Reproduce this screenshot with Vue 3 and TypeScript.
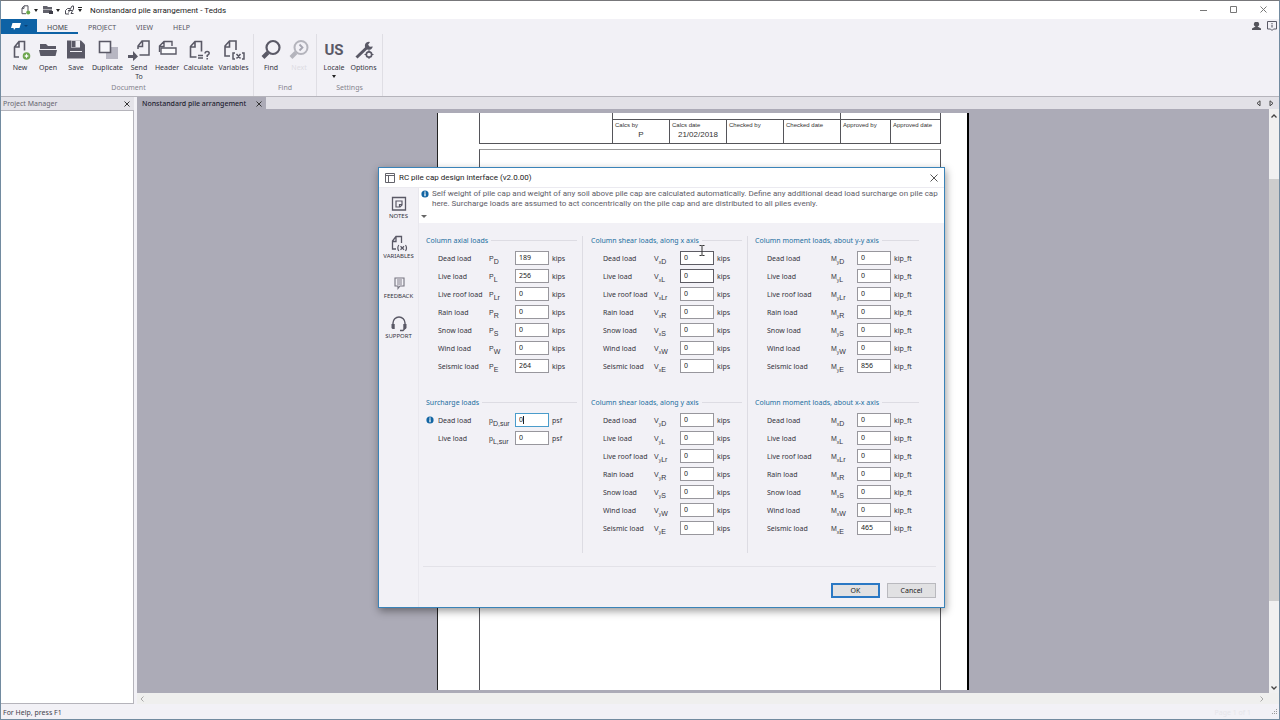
<script setup lang="ts">
import { reactive } from 'vue'

interface Load {
  id: string
  label: string
  base: string
  axis: string
  sub: string
  value: string
  state?: 'focused' | 'dark'
  info?: boolean
}
interface Group {
  title: string
  unit: string
  kind: 'narrow' | 'wide'
  loads: Load[]
}

const names: [string, string][] = [
  ['Dead load', 'D'],
  ['Live load', 'L'],
  ['Live roof load', 'Lr'],
  ['Rain load', 'R'],
  ['Snow load', 'S'],
  ['Wind load', 'W'],
  ['Seismic load', 'E'],
]

function series(base: string, axis: string, values: string[]): Load[] {
  return names.map(([label, sub], i) => ({
    id: `${base}${axis}${sub}`,
    label,
    base,
    axis,
    sub,
    value: values[i],
  }))
}

const columns = reactive<Group[][]>([
  [
    { title: 'Column axial loads', unit: 'kips', kind: 'narrow', loads: series('P', '', ['189', '256', '0', '0', '0', '0', '264']) },
    {
      title: 'Surcharge loads',
      unit: 'psf',
      kind: 'narrow',
      loads: [
        { id: 'surD', label: 'Dead load', base: 'p', axis: '', sub: 'D,sur', value: '0', state: 'focused', info: true },
        { id: 'surL', label: 'Live load', base: 'p', axis: '', sub: 'L,sur', value: '0' },
      ],
    },
  ],
  [
    { title: 'Column shear loads, along x axis', unit: 'kips', kind: 'narrow', loads: series('V', 'x', ['0', '0', '0', '0', '0', '0', '0']) },
    { title: 'Column shear loads, along y axis', unit: 'kips', kind: 'narrow', loads: series('V', 'y', ['0', '0', '0', '0', '0', '0', '0']) },
  ],
  [
    { title: 'Column moment loads, about y-y axis', unit: 'kip_ft', kind: 'wide', loads: series('M', 'y', ['0', '0', '0', '0', '0', '0', '856']) },
    { title: 'Column moment loads, about x-x axis', unit: 'kip_ft', kind: 'wide', loads: series('M', 'x', ['0', '0', '0', '0', '0', '0', '465']) },
  ],
])
columns[1][0].loads[0].state = 'dark'
columns[1][0].loads[1].state = 'dark'

const menu = ['HOME', 'PROJECT', 'VIEW', 'HELP']
</script>

<template>
  <div class="app">
    <header class="titlebar">
      <div class="quick">
        <button aria-label="New document">
          <svg width="10" height="10" viewBox="0 0 10 10"><path d="M3 .8h4v5M3 .8L1 3.2v5.5h4M3 1v2.4H1" fill="none" stroke="#55555f" /><circle cx="7.2" cy="7.5" r="2" fill="#6aa84a" /></svg>
        </button>
        <i class="caret"></i>
        <button aria-label="Open document">
          <svg width="10" height="10" viewBox="0 0 10 10"><path d="M0 1h4l1 1h4v2H0zM0 4.5h9V8H0z" fill="#62626c" /><path d="M6 6h4v3H6z" fill="#3e3e48" /></svg>
        </button>
        <i class="caret"></i>
        <button aria-label="Calculate document">
          <svg width="10" height="10" viewBox="0 0 10 10"><path d="M.5 9V5.500L2.500 3.500H5M.5 9H4M3.500 7.500L7 1h1.500v3L6 8.500h2.500M3 5.500h4" fill="none" stroke="#4c4c56" /></svg>
        </button>
        <i class="caret barred"></i>
      </div>
      <h1>Nonstandard pile arrangement - Tedds</h1>
      <div class="winbuttons">
        <button aria-label="Minimize"><svg width="8" height="8"><path d="M0 4.5h7" stroke="#777" /></svg></button>
        <button aria-label="Maximize"><svg width="8" height="8"><path d="M.5.5h6v6h-6z" fill="none" stroke="#777" /></svg></button>
        <button aria-label="Close"><svg width="8" height="8"><path d="M.5.5l6 6m0-6l-6 6" stroke="#777" /></svg></button>
      </div>
    </header>

    <nav class="menubar">
      <button class="filetab" aria-label="File">
        <svg width="34" height="14" viewBox="0 0 34 14"><path d="M11.500 3h8.500l-1.500 5h-4l-1.500 2-.5-2H10z" fill="#fff" /><path d="M23 5h4l-2 2z" fill="#0a4176" /></svg>
      </button>
      <button v-for="(m, i) in menu" :key="m" class="tab" :class="{ active: i === 0 }">{{ m }}</button>
      <div class="account">
        <button aria-label="Account"><svg width="9" height="9" viewBox="0 0 9 9"><path d="M4.500 0a2 2.200 0 0 1 1 4.600L9 6.500V8H0V6.500l3.500-1.900A2 2.200 0 0 1 4.500 0z" fill="#55555c" /></svg></button>
        <button aria-label="Information"><svg width="10" height="11" viewBox="0 0 10 11"><path d="M.5.5h9v7.500H6.500L5 9.500 3.500 8h-3z" fill="none" stroke="#5a5a66" /><path d="M5 2v1M5 3.700V6.500" stroke="#4a4a58" /></svg></button>
      </div>
    </nav>

    <div class="ribbon">
      <section class="rgroup document">
        <div class="tools">
          <button class="tool"><svg viewBox="0 0 22 22"><path d="M10 18H5.500V8L10 2.500h5.500v9M10 3v5H5.500" fill="none" stroke="#5a5966" stroke-width="1.600" /><circle cx="17.500" cy="17" r="3.800" fill="#6fa650" /><path d="M17.500 14.500l.8 1.700 1.700.8-1.700.8-.8 1.700-.8-1.700-1.700-.8 1.700-.8z" fill="#fff" /></svg><span>New</span></button>
          <button class="tool"><svg viewBox="0 0 22 22"><path d="M3 5h6l2 2h8v3H3zM2 11h18l-1.500 6h-15z" fill="#5a5966" /></svg><span>Open</span></button>
          <button class="tool"><svg viewBox="0 0 22 22"><path d="M2 1.500h14l4 4v14H2z" fill="#5a5966" /><path d="M6 1.500h9v7H6zM5 12h12v1H5z" fill="#f2f1f6" /><path d="M6.500 2h4v6h-4z" fill="#5a5966" /></svg><span>Save</span></button>
          <button class="tool wide"><svg viewBox="0 0 22 22"><path d="M9 8h12v12H9z" fill="#b7b6c2" /><path d="M2.500 2.500h11v11h-11z" fill="#f6f6fa" stroke="#5a5966" stroke-width="1.600" /></svg><span>Duplicate</span></button>
          <button class="tool"><svg viewBox="0 0 22 22"><path d="M10 10V7l4-5h7v14h-9.500M14.500 2v5.500H10" fill="none" stroke="#5a5966" stroke-width="1.500" /><path d="M0 16h5v-4l5 5.500-5 4.500v-3H0z" fill="#5a5966" /></svg><span>Send To</span></button>
          <button class="tool"><svg viewBox="0 0 22 22"><path d="M3.500 13V7L8 2.500h8V7M8 3v4.500H3.500" fill="none" stroke="#5a5966" stroke-width="1.400" /><path d="M5 9h15v6H5z" fill="#fafafc" stroke="#5a5966" stroke-width="1.400" /></svg><span>Header</span></button>
          <button class="tool wide"><svg viewBox="0 0 22 22"><path d="M8.500 18H2.500V7.500L7 2.500h6.500v10M7 3v5H2.500" fill="none" stroke="#5a5966" stroke-width="1.600" /><path d="M10 16.500h5M10 19h5M17 14.500q.2-2 2.200-2t2 1.800q0 1.200-2 2.200v1.400M19.200 19v1.500" fill="none" stroke="#5a5966" stroke-width="1.500" /></svg><span>Calculate</span></button>
          <button class="tool wide"><svg viewBox="0 0 22 22"><path d="M7 17H2V7l4.500-5H13v9M6.500 2.500V8H2" fill="none" stroke="#5a5966" stroke-width="1.600" /><path d="M12 14h-2v6h2M19 14h2v6h-2M13.500 15l4 4.500m0-4.500l-4 4.500" fill="none" stroke="#5a5966" stroke-width="1.500" /></svg><span>Variables</span></button>
        </div>
        <h2>Document</h2>
      </section>
      <section class="rgroup">
        <div class="tools">
          <button class="tool"><svg viewBox="0 0 22 22"><circle cx="13" cy="8.500" r="6.500" fill="none" stroke="#5a5966" stroke-width="2.200" /><path d="M8 13.500L3 18.500" stroke="#5a5966" stroke-width="4" /></svg><span>Find</span></button>
          <button class="tool disabled"><svg viewBox="0 0 22 22"><circle cx="13" cy="8.500" r="6.500" fill="none" stroke="#b4b4bc" stroke-width="2" /><path d="M8 13.500L3 18.500" stroke="#b4b4bc" stroke-width="4" /><path d="M11.500 5.500l3 3-3 3" fill="none" stroke="#a5a5b0" stroke-width="1.800" /></svg><span>Next</span></button>
        </div>
        <h2>Find</h2>
      </section>
      <section class="rgroup">
        <div class="tools">
          <button class="tool"><b class="us">US</b><span>Locale</span><i class="caret"></i></button>
          <button class="tool options"><svg viewBox="0 0 22 22"><path d="M3.500 18.500L14 8.500" stroke="#5a5966" stroke-width="3" /><path d="M17 3a4 4 0 1 0 2.800 4.500l-3 .3-1.700-2z" fill="#5a5966" /><circle cx="16" cy="15.500" r="2.700" fill="#f2f1f6" stroke="#5a5966" stroke-width="1.700" /><path d="M16 11v2m0 5v2m-4.500-4.500h2m5 0h2" stroke="#5a5966" /></svg><span>Options</span></button>
        </div>
        <h2>Settings</h2>
      </section>
    </div>

    <main class="workspace">
      <aside class="project">
        <div class="panelhead"><h2>Project Manager</h2><button aria-label="Close Project Manager"><svg width="6" height="6"><path d="M.5.5l5 5m0-5l-5 5" stroke="#333" /></svg></button></div>
        <div class="panelbody"></div>
      </aside>
      <section class="editor">
        <div class="doctabs">
          <div class="doctab"><span>Nonstandard pile arrangement</span><button aria-label="Close tab"><svg width="6" height="6"><path d="M.5.5l5 5m0-5l-5 5" stroke="#333" /></svg></button></div>
          <div class="tabnav">
            <button aria-label="Previous tab"><svg width="5" height="7"><path d="M4 .8v5L1 3.300z" fill="none" stroke="#444" /></svg></button>
            <button aria-label="Next tab"><svg width="5" height="7"><path d="M1 .8v5l3-2.500z" fill="none" stroke="#444" /></svg></button>
          </div>
        </div>
        <div class="canvasrow">
          <div class="canvas">
            <div class="page">
              <table class="calc">
                <colgroup><col class="cblank" /><col span="4" class="cwide" /><col span="2" class="cslim" /></colgroup>
                <tbody>
                  <tr class="upper"><td rowspan="2"></td><td colspan="4"></td><td colspan="2"></td></tr>
                  <tr>
                    <td>Calcs by<p>P</p></td>
                    <td>Calcs date<p>21/02/2018</p></td>
                    <td>Checked by</td>
                    <td>Checked date</td>
                    <td>Approved by</td>
                    <td>Approved date</td>
                  </tr>
                </tbody>
              </table>
              <div class="frame"></div>
            </div>
          </div>
          <div class="vscroll">
            <svg width="6" height="4"><path d="M.5 3.500L3 1l2.500 2.500" fill="none" stroke="#444" stroke-width="1.300" /></svg>
            <div class="thumb"></div>
            <svg width="6" height="4"><path d="M.5.5L3 3 5.500.5" fill="none" stroke="#444" stroke-width="1.300" /></svg>
          </div>
        </div>
        <div class="hscroll">
          <svg width="4" height="6"><path d="M3.500.5L1 3l2.500 2.500" fill="none" stroke="#a8a8a8" /></svg>
          <svg width="4" height="6"><path d="M.5.5L3 3 .5 5.500" fill="none" stroke="#a8a8a8" /></svg>
        </div>
      </section>
    </main>

    <footer class="status"><span>For Help, press F1</span><span class="pageno">Page 1 of 1</span>
      <svg width="7" height="7" viewBox="0 0 7 7"><path d="M5 0h1v1H5zM3 2h1v1H3zM5 2h1v1H5zM1 4h1v1H1zM3 4h1v1H3zM5 4h1v1H5z" fill="#999" /></svg>
    </footer>

    <div class="dialog" role="dialog" aria-labelledby="dlgtitle">
      <div class="dlghead">
        <svg width="10" height="10" viewBox="0 0 10 10"><path d="M.5.5h9v9h-9zM.5 2.500h9M3.500 2.500v7" fill="#fff" stroke="#63636b" /></svg>
        <h2 id="dlgtitle">RC pile cap design interface (v2.0.00)</h2>
        <button aria-label="Close dialog"><svg width="8" height="8"><path d="M.5.5l7 7m0-7l-7 7" stroke="#555" /></svg></button>
      </div>
      <div class="dlgmain">
        <nav class="side">
          <button><svg viewBox="0 0 18 18"><path d="M2.500 2.500h13v12.500h-13z" fill="none" stroke="#5a5966" stroke-width="1.300" /><path d="M6 6h6v4l-2 2H6zM12 9.500H9.500V12" fill="none" stroke="#5a5966" stroke-width="1.200" /></svg>NOTES</button>
          <button><svg viewBox="0 0 18 18"><path d="M6 14H2.500V6L6 1.500h5.500V8M6 2v4.500H2.500" fill="none" stroke="#5a5966" stroke-width="1.300" /><path d="M8.800 10q-2 3 0 6M15.500 10q2 3 0 6M10.500 11.300l3.500 3.400m0-3.400l-3.500 3.400" fill="none" stroke="#5a5966" stroke-width="1.200" /></svg>VARIABLES</button>
          <button><svg viewBox="0 0 18 18"><path d="M5 3h9v8H10l-2 2.500V11H5z" fill="none" stroke="#74737f" stroke-width="1.100" /><path d="M7 5h5M7 7h5M7 9h5" stroke="#74737f" stroke-width=".9" /></svg>FEEDBACK</button>
          <button><svg viewBox="0 0 18 18"><path d="M3 10V8a6 6 0 0 1 12 0v5.500l-2 2H10" fill="none" stroke="#5a5966" stroke-width="1.400" /><path d="M1.500 9h3.200v5H2.500l-1-1zM13.300 9h3.200v4l-1 1h-2.200z" fill="#5a5966" /></svg>SUPPORT</button>
        </nav>
        <div class="content">
          <div class="notice">
            <svg class="infoicon" width="8" height="8" viewBox="0 0 8 8"><circle cx="4" cy="4" r="3.600" fill="#1265a3" /><path d="M4 1.500v1.200M4 3.300v3" stroke="#fff" stroke-width="1.300" /></svg>
            <p>Self weight of pile cap and weight of any soil above pile cap are calculated automatically. Define any additional dead load surcharge on pile cap<br />here. Surcharge loads are assumed to act concentrically on the pile cap and are distributed to all piles evenly.</p>
            <i class="expander"></i>
          </div>
          <form class="loads" @submit.prevent>
            <div v-for="(col, c) in columns" :key="c" class="column">
              <section v-for="g in col" :key="g.title" class="group">
                <h3>{{ g.title }}</h3>
                <div v-for="l in g.loads" :key="l.id" class="load" :class="g.kind">
                  <span><svg v-if="l.info" class="infoicon" width="8" height="8" viewBox="0 0 8 8"><circle cx="4" cy="4" r="3.600" fill="#1265a3" /><path d="M4 1.500v1.200M4 3.300v3" stroke="#fff" stroke-width="1.300" /></svg></span>
                  <label :for="l.id">{{ l.label }}</label>
                  <span class="symbol">{{ l.base }}<sub><small v-if="l.axis">{{ l.axis }}</small>{{ l.sub }}</sub></span>
                  <span class="field"><input :id="l.id" v-model="l.value" type="text" :class="l.state" /><i v-if="l.state === 'focused'" class="textcaret"></i></span>
                  <span>{{ g.unit }}</span>
                </div>
              </section>
            </div>
          </form>
          <div class="actions"><button class="primary">OK</button><button>Cancel</button></div>
        </div>
      </div>
      <svg class="pointer" width="6" height="11" viewBox="0 0 6 11"><path d="M.5.5H2.500L3 1l.5-.5h2M3 1v9M.5 10.500h2L3 10l.5.5h2" fill="none" stroke="#333" /></svg>
    </div>
  </div>
</template>

<style>
body { margin: 0; overflow: hidden; }
</style>

<style scoped>
* { box-sizing: border-box; }
h1, h2, h3, p { margin: 0; font-size: inherit; font-weight: 400; }
button { font: inherit; color: inherit; border: 0; padding: 0; background: none; }
svg { display: block; flex: none; }
.app {
  position: relative;
  height: 100vh;
  display: flex;
  flex-direction: column;
  background: #f2f1f6;
  border: 1px solid #728ba0;
  border-top-color: #77777a;
  font: 7px/9px "Noto Sans", "Open Sans", sans-serif;
  color: #44434d;
  overflow: hidden;
}
.caret { width: 0; height: 0; border: 2px solid transparent; border-top: 3px solid #222; border-bottom: 0; }
.titlebar { height: 18px; flex: none; background: #fff; display: flex; align-items: center; padding: 0 11px 0 20px; }
.quick { display: flex; align-items: center; gap: 3px; width: 69px; }
.quick .caret { margin-right: 2px; }
.quick .barred { position: relative; }
.quick .barred::before { content: ""; position: absolute; left: -2px; top: -5px; width: 4px; height: 1px; background: #222; }
.titlebar h1, .dlghead h2, .notice p { font-family: Roboto, "Open Sans", sans-serif; font-size: 8px; }
.titlebar h1 { color: #222; white-space: nowrap; }
.winbuttons { margin-left: auto; display: flex; gap: 22px; }
.menubar { height: 15px; flex: none; display: flex; }
.filetab { width: 36px; background: #0e62a5; }
.tab { color: #55545e; padding: 3px 10px 0; border-bottom: 2px solid transparent; height: 15px; }
.tab.active { border-color: #0e62a5; color: #3f3e48; }
.account { margin-left: auto; display: flex; align-items: center; gap: 6px; padding-right: 2px; }
.ribbon { height: 62px; flex: none; display: flex; }
.rgroup { padding: 5px 3px 0; border-right: 1px solid #dfdee4; display: flex; flex-direction: column; }
.rgroup.document { padding: 5px 2px 0 5px; }
.rgroup h2 { text-align: center; color: #85848e; margin-top: auto; padding-bottom: 4px; }
.tools { display: flex; align-items: flex-start; }
.tool { width: 28px; display: flex; flex-direction: column; align-items: center; color: #34333e; }
.tool.wide { width: 35px; }
.tool.options { width: 31px; }
.tool svg { width: 22px; height: 22px; margin-bottom: 2px; }
.tool span { max-width: 35px; }
.tool:nth-child(5) span { width: 20px; }
.tool .caret { margin-top: 3px; }
.disabled { color: #dddce3; }
.us { font: 700 15px/22px Roboto, sans-serif; height: 22px; margin-bottom: 2px; color: #5a5966; }
.workspace { flex: 1; min-height: 0; display: flex; gap: 3px; border-top: 1px solid #b5b4bb; }
.project { width: 133px; flex: none; display: flex; flex-direction: column; }
.panelhead { height: 13px; display: flex; align-items: center; justify-content: space-between; padding: 0 4px 0 2px; background: #e4e3e9; }
.panelhead h2 { color: #66656f; }
.panelbody { flex: 1; background: #fff; border: 1px solid #b5b4bb; border-left: 0; }
.editor { flex: 1; min-width: 0; display: flex; flex-direction: column; }
.doctabs { height: 12px; flex: none; background: #e2e1e7; display: flex; justify-content: space-between; }
.doctab { background: #acabb7; color: #222230; display: flex; align-items: center; gap: 10px; padding: 0 4px 0 5px; font-weight: 500; }
.doctab button { padding-top: 1px; }
.tabnav { display: flex; align-items: center; gap: 8px; padding-right: 5px; }
.canvasrow { flex: 1; min-height: 0; display: flex; }
.canvas { flex: 1; background: #acabb7; padding: 4px 0 3px 300px; display: flex; }
.page { width: 532px; background: #fff; border-left: 1px solid #222; border-right: 2px solid #000; padding: 0 27px 0 41px; display: flex; flex-direction: column; }
.calc { border-collapse: collapse; table-layout: fixed; width: 461px; font: 6px/8px "Liberation Sans", Arial, sans-serif; color: #333; }
.calc td { border: 1px solid #55555a; padding: 1px 2px 0; height: 24px; vertical-align: top; white-space: nowrap; }
.cblank { width: 133px; }
.cwide { width: 57px; }
.cslim { width: 50px; }
.calc .upper td { height: 6px; padding: 0; border-top: 0; }
.calc p { font-size: 8px; line-height: 10px; text-align: center; margin-top: 1px; }
.frame { flex: 1; width: 462px; margin-top: 5px; border: 1px solid #55555a; border-top-color: #999; border-bottom: 0; }
.vscroll { width: 10px; flex: none; background: #f0f0f0; display: flex; flex-direction: column; align-items: center; padding: 5px 0 3px; }
.thumb { width: 10px; height: 422px; margin: 61px 0 auto; background: #cdcdcd; }
.hscroll { height: 11px; flex: none; background: #efefee; display: flex; justify-content: space-between; align-items: center; padding: 0 15px 0 3px; }
.status { height: 15px; flex: none; display: flex; align-items: center; padding: 1px 1px 0 2px; }
.pageno { margin-left: auto; margin-right: 20px; color: #e6e5ea; }
.dialog {
  position: absolute;
  left: 377px;
  top: 166px;
  width: 567px;
  background: #f2f1f6;
  border: 1px solid #3a83b8;
  box-shadow: 1px 3px 8px rgba(0, 0, 0, 0.4);
  color: #34333c;
}
.dlghead { height: 19px; display: flex; align-items: center; gap: 4px; background: #fff; padding: 0 6px; }
.dlghead h2 { flex: 1; color: #222; }
.dlgmain { display: flex; border-top: 1px solid #ebeaf0; }
.side { width: 40px; display: flex; flex-direction: column; gap: 15px; padding-top: 7px; border-right: 1px solid #e9e8ee; }
.side button { display: flex; flex-direction: column; align-items: center; font-size: 6px; line-height: 7px; color: #333240; }
.side svg { width: 18px; height: 18px; }
.content { flex: 1; min-width: 0; }
.notice { position: relative; height: 35px; background: #fff; display: flex; gap: 3px; padding: 1px 0 0 2px; color: #5e5d67; line-height: 10px; white-space: nowrap; }
.notice .infoicon { margin-top: 1px; }
.expander { position: absolute; left: 2px; bottom: 5px; border: 3px solid transparent; border-top-color: #666; border-bottom: 0; }
.loads { display: flex; padding-top: 13px; }
.column { border-right: 1px solid #dddce3; padding: 0 5px 0 7px; display: flex; flex-direction: column; gap: 18px; height: 317px; }
.column:nth-child(2) { padding-left: 8px; }
.column:nth-child(3) { border: 0; }
.group { margin-top: -5px; }
.group + .group { margin-top: 0; }
.group h3 { display: flex; align-items: center; gap: 3px; height: 18px; color: #236f9f; white-space: nowrap; }
.group h3::after { content: ""; flex: 1; height: 1px; background: #dddce3; }
.load { display: grid; grid-template-columns: 12px 51px 26px 34px 28px; height: 18px; align-items: center; white-space: nowrap; }
.load.wide { grid-template-columns: 12px 64px 26px 34px 28px; }
.load > span:last-child { padding-left: 3px; }
.symbol { font-family: "Liberation Sans", Arial, sans-serif; }
.symbol sub { font-size: 7px; line-height: 0; vertical-align: -3px; }
.symbol small { font-size: 5px; }
.field { position: relative; display: block; height: 14px; }
.field input { display: block; width: 100%; height: 14px; border: 1px solid #98979d; border-radius: 0; background: #fff; padding: 0 3px 1px; font: inherit; color: #222; outline: 0; }
.field .dark { border-color: #5d5c64; }
.field .focused { border-color: #4a9ccb; }
.textcaret { position: absolute; left: 8px; top: 3px; width: 1px; height: 8px; background: #222; }
.actions { display: flex; justify-content: flex-end; gap: 7px; margin: 13px 8px 0 4px; padding: 16px 0 9px; border-top: 1px solid #e3e2e8; }
.actions button { width: 49px; height: 15px; background: #e1e1e3; border: 1px solid #b9b9be; color: #222; }
.actions .primary { border: 2px solid #2a78c4; }
.pointer { position: absolute; left: 320px; top: 77px; }
</style>
